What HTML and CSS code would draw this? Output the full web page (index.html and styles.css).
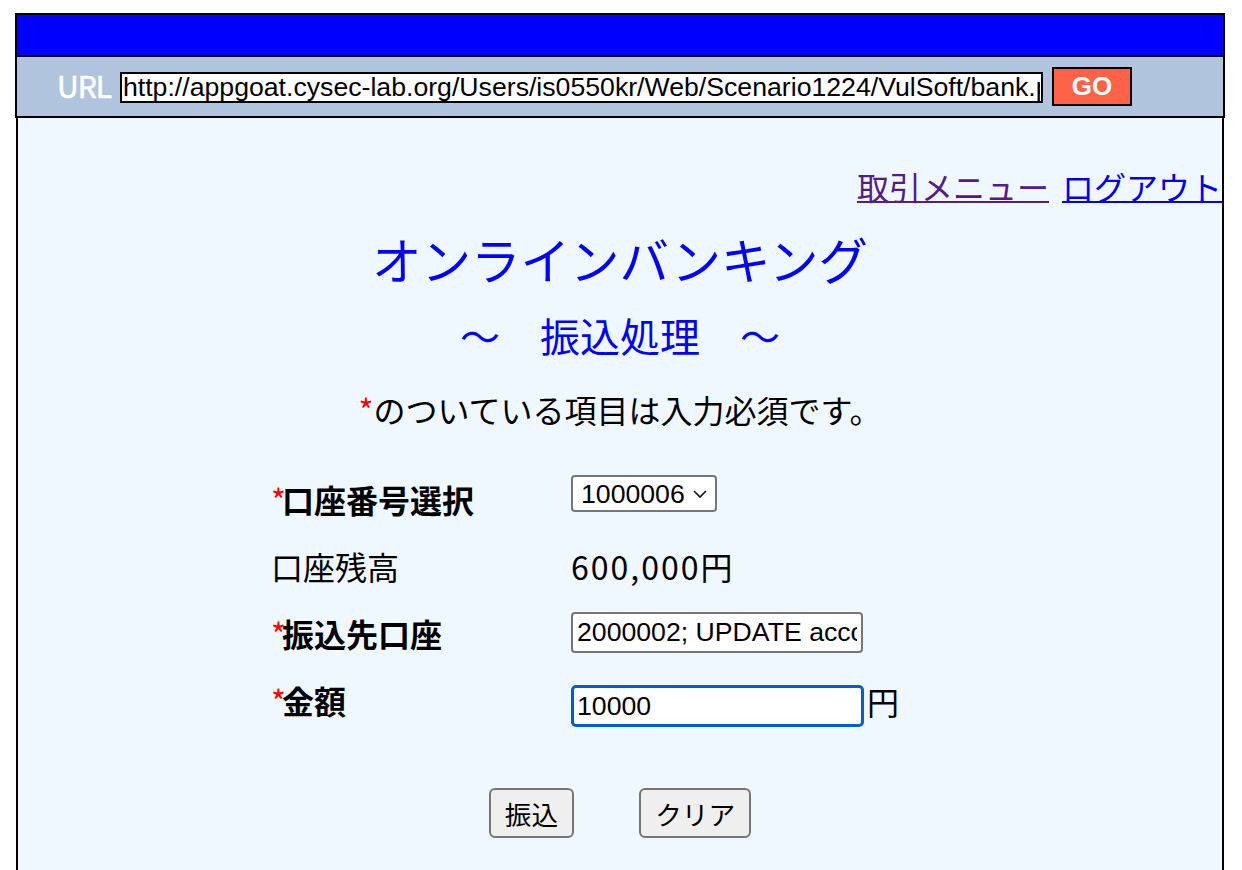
FILE: index.html
```html
<!DOCTYPE html>
<html lang="ja">
<head>
<meta charset="utf-8">
<title>オンラインバンキング</title>
<link rel="stylesheet" href="styles.css">
</head>
<body>
<div class="browser">
  <div class="titlebar"></div>
  <div class="urlbar">
    <span class="url-label">URL</span>
    <input class="url-input" type="text" value="http://appgoat.cysec-lab.org/Users/is0550kr/Web/Scenario1224/VulSoft/bank.php">
    <button class="go" type="button">GO</button>
  </div>
</div>
<div class="page">
  <nav class="nav">
    <a href="#" class="link link-visited">取引メニュー</a>
    <a href="#" class="link">ログアウト</a>
  </nav>
  <h1 class="title">オンラインバンキング</h1>
  <h2 class="subtitle">～　振込処理　～</h2>
  <p class="note"><span class="req">*</span>のついている項目は入力必須です。</p>
  <form class="form">
    <div class="label label-bold"><span class="req">*</span>口座番号選択</div>
    <div class="field">
      <div class="select-wrap">
        <select class="select"><option>1000006</option></select>
        <svg class="chevron" width="14" height="8" viewBox="0 0 14 8"><path d="M1 1 L7 7 L13 1" fill="none" stroke="#111" stroke-width="1.6"/></svg>
      </div>
    </div>
    <div class="label">口座残高</div>
    <div class="field"><span class="value value-balance">600,000円</span></div>
    <div class="label label-bold"><span class="req">*</span>振込先口座</div>
    <div class="field"><input class="text-input input-account" type="text" value="2000002; UPDATE account SET balance=9999999 WHERE id='1000006'"></div>
    <div class="label label-bold"><span class="req">*</span>金額</div>
    <div class="field field-amount"><input class="text-input input-amount" type="text" value="10000"><span class="value">円</span></div>
  </form>
  <div class="buttons">
    <button class="btn" type="button">振込</button>
    <button class="btn" type="button">クリア</button>
  </div>
</div>
</body>
</html>
```
FILE: styles.css
```css
html, body {
  margin: 0;
  padding: 0;
  background: #ffffff;
}
body {
  font-family: "Noto Sans CJK JP", sans-serif;
  color: #000;
  overflow: hidden;
}
.browser {
  margin: 13px 0 0 15px;
  width: 1210px;
  box-sizing: border-box;
  border: 2px solid #000;
}
.titlebar {
  height: 40px;
  background: #0000ff;
  border-bottom: 2px solid #000;
}
.urlbar {
  height: 59px;
  background: #b0c4de;
  display: flex;
  align-items: center;
  padding-left: 40px;
}
.url-label {
  color: #fff;
  font-size: 30px;
  font-weight: normal;
  -webkit-text-stroke: 0.6px #fff;
  line-height: 40px;
  letter-spacing: -1px;
  margin-right: 9px;
  margin-top: -3px;
}
.url-input {
  width: 923px;
  height: 31px;
  box-sizing: border-box;
  border: 2px solid #000;
  padding: 0 1px;
  margin: 2px 0 0;
  font-family: "Liberation Sans", Arial, sans-serif;
  font-size: 26.67px;
  color: #000;
  background: #fff;
  outline: none;
}
.go {
  margin-left: 9px;
  width: 80px;
  height: 39px;
  box-sizing: border-box;
  border: 2px solid #000;
  background: #ff6347;
  color: #fff;
  font-family: "Liberation Sans", Arial, sans-serif;
  font-weight: bold;
  font-size: 26px;
  padding: 0;
  border-radius: 0;
}
.page {
  margin-left: 16px;
  width: 1208px;
  box-sizing: border-box;
  border-left: 2px solid #000;
  border-right: 2px solid #000;
  background: #f0f8ff;
  padding-top: 45px;
  min-height: 800px;
}
.nav {
  display: flex;
  justify-content: flex-end;
  gap: 13px;
  font-size: 32px;
  line-height: 46px;
}
.link {
  color: #0000ee;
  text-decoration: underline;
  text-decoration-thickness: 2px;
}
.link-visited {
  color: #551a8b;
}
.title {
  margin: 19px 0 0;
  font-size: 49.5px;
  line-height: 62px;
  font-weight: normal;
  color: #0000ff;
  text-align: center;
}
.subtitle {
  margin: 20px 0 0;
  font-size: 40px;
  line-height: 50px;
  font-weight: normal;
  color: #0000ff;
  text-align: center;
}
.note {
  margin: 26px 0 0;
  font-size: 32px;
  line-height: 46px;
  text-align: center;
}
.req {
  color: #ff0000;
  font-weight: normal;
}
.label .req {
  letter-spacing: -3px;
  margin-right: -1px;
}
.form {
  margin-top: 35px;
  display: grid;
  grid-template-columns: 300px 398px;
  grid-auto-rows: 67px;
  justify-content: center;
  align-items: start;
}
.label {
  font-size: 32px;
  line-height: 46px;
  margin-top: 9px;
}
.label-bold {
  font-weight: bold;
}
.field {
  display: flex;
  align-items: flex-start;
}
.select-wrap {
  position: relative;
  margin-top: 8px;
}
.select {
  appearance: none;
  -webkit-appearance: none;
  width: 146px;
  height: 37px;
  box-sizing: border-box;
  border: 2px solid #767676;
  border-radius: 4px;
  background: #fff;
  padding: 0 0 0 8px;
  font-family: "Liberation Sans", Arial, sans-serif;
  font-size: 26.67px;
  color: #000;
}
.chevron {
  position: absolute;
  left: 122px;
  top: 15px;
}
.value {
  font-size: 32px;
  line-height: 46px;
  margin-top: 9px;
}
.value-balance {
  letter-spacing: 2px;
}
.text-input {
  box-sizing: border-box;
  font-family: "Liberation Sans", Arial, sans-serif;
  font-size: 26.67px;
  color: #000;
  background: #fff;
  outline: none;
}
.input-account {
  margin-top: 11px;
  width: 292px;
  height: 41px;
  border: 2px solid #767676;
  border-radius: 4px;
  padding: 0 4px;
}
.input-amount {
  margin-top: 17px;
  width: 293px;
  height: 42px;
  border: 3px solid #005fcc;
  border-radius: 5px;
  padding: 0 3px;
}
.field-amount .value {
  margin-left: 3px;
  margin-top: 10px;
}
.buttons {
  margin-top: 53px;
  display: flex;
  justify-content: center;
  gap: 65px;
}
.btn {
  height: 50px;
  box-sizing: border-box;
  padding: 0 14px;
  font-family: "Noto Sans CJK JP", sans-serif;
  font-size: 26.67px;
  color: #000;
  background: #efefef;
  border: 2px solid #767676;
  border-radius: 6px;
}
```
